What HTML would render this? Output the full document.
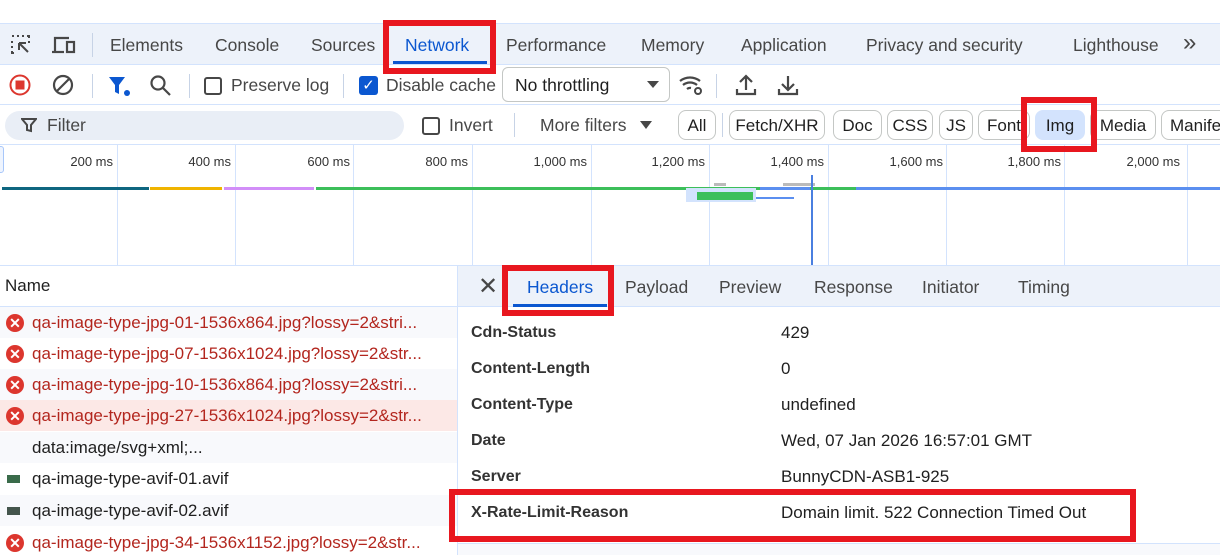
<!DOCTYPE html>
<html><head><meta charset="utf-8"><style>
*{margin:0;padding:0;box-sizing:border-box}
body{width:1220px;height:555px;overflow:hidden;background:#fff;font-family:"Liberation Sans",sans-serif;color:#1f1f1f;position:relative}
.a{position:absolute;white-space:nowrap}
.t{font-size:17.5px;color:#474747}
.red{position:absolute;border:6px solid #e8171f}
.chip{position:absolute;top:110px;height:30px;border:1px solid #c4c7c5;border-radius:8px;font-size:17px;line-height:30px;text-align:center;color:#1f1f1f;overflow:hidden}
.ms{position:absolute;top:154px;font-size:13px;color:#333;text-align:right;width:80px}
.vl{position:absolute;top:145px;width:1px;height:120px;background:#d3e3fd}
.row{position:absolute;left:0;width:457px;height:31px;font-size:17px;line-height:31px}
.row span{position:absolute;left:32px}
.err{position:absolute;left:6px;top:7px;width:18px;height:18px;border-radius:50%;background:#dc362e;color:#fff;font-size:14px;line-height:18px;text-align:center;font-weight:bold}
.rd{color:#b3261e}
.hk{position:absolute;left:471px;font-size:16px;font-weight:bold;color:#333}
.hv{position:absolute;left:781px;font-size:17px;color:#1f1f1f}
</style></head><body>
<div class="a" style="left:0;top:23px;width:1220px;height:42px;background:#edf2fa;border-top:1px solid #d3e3fd;border-bottom:1px solid #d3e3fd"></div>
<svg class="a" style="left:10px;top:34px" width="22" height="22" viewBox="0 0 22 22" fill="none" stroke="#474747" stroke-width="2"><path d="M2 2h2M7 2h2M12 2h2M17 2h2v2M2 7v2M2 12v2M2 17v2h2M19 7v2" /><path d="M9 9l9 9M9 9v7M9 9h7"/></svg>
<svg class="a" style="left:51px;top:34px" width="26" height="22" viewBox="0 0 26 22" fill="none" stroke="#474747" stroke-width="2.2"><path d="M4 18V4h14"/><path d="M1 18h12"/><rect x="16" y="8" width="7" height="10"/></svg>
<div class="a" style="left:92px;top:33px;width:1px;height:24px;background:#c7d3e6"></div>
<div class="a t" style="left:110px;top:35px">Elements</div>
<div class="a t" style="left:215px;top:35px">Console</div>
<div class="a t" style="left:311px;top:35px">Sources</div>
<div class="a t" style="left:405px;top:35px;color:#0b57d0">Network</div>
<div class="a" style="left:393px;top:61px;width:94px;height:3px;background:#0b57d0"></div>
<div class="a t" style="left:506px;top:35px">Performance</div>
<div class="a t" style="left:641px;top:35px">Memory</div>
<div class="a t" style="left:741px;top:35px">Application</div>
<div class="a t" style="left:866px;top:35px">Privacy and security</div>
<div class="a t" style="left:1073px;top:35px">Lighthouse</div>
<div class="a t" style="left:1183px;top:29px;font-size:24px">&#187;</div>
<svg class="a" style="left:9px;top:74px" width="22" height="22" viewBox="0 0 22 22"><circle cx="11" cy="11" r="9.5" fill="none" stroke="#dc362e" stroke-width="2"/><rect x="6.5" y="6.5" width="9" height="9" fill="#dc362e"/></svg>
<svg class="a" style="left:52px;top:74px" width="22" height="22" viewBox="0 0 22 22" fill="none" stroke="#474747" stroke-width="2.2"><circle cx="11" cy="11" r="9"/><path d="M4.5 17.5L17.5 4.5"/></svg>
<div class="a" style="left:92px;top:74px;width:1px;height:24px;background:#c7d3e6"></div>
<svg class="a" style="left:108px;top:75px" width="24" height="22" viewBox="0 0 24 22"><path d="M1 2h16l-6 8v9l-4-2v-7z" fill="#0b57d0"/><circle cx="19" cy="18" r="3" fill="#0b57d0"/></svg>
<svg class="a" style="left:149px;top:74px" width="24" height="24" viewBox="0 0 24 24" fill="none" stroke="#474747" stroke-width="2.2"><circle cx="9" cy="9" r="6.5"/><path d="M14 14l7 7"/></svg>
<div class="a" style="left:189px;top:74px;width:1px;height:24px;background:#c7d3e6"></div>
<div class="a" style="left:204px;top:77px;width:18px;height:18px;border:2px solid #474747;border-radius:3px"></div>
<div class="a t" style="left:231px;top:75px">Preserve log</div>
<div class="a" style="left:343px;top:74px;width:1px;height:24px;background:#c7d3e6"></div>
<div class="a" style="left:359px;top:76px;width:19px;height:19px;background:#0b57d0;border-radius:3px;color:#fff;font-size:15px;line-height:19px;text-align:center">&#10003;</div>
<div class="a t" style="left:386px;top:75px">Disable cache</div>
<div class="a" style="left:502px;top:67px;width:168px;height:35px;border:1px solid #c4c7c5;border-radius:6px"></div>
<div class="a t" style="left:515px;top:75px;color:#1f1f1f">No throttling</div>
<div class="a" style="left:647px;top:81px;border-left:6px solid transparent;border-right:6px solid transparent;border-top:7px solid #474747"></div>
<svg class="a" style="left:678px;top:73px" width="28" height="24" viewBox="0 0 28 24" fill="none" stroke="#474747" stroke-width="2.2"><path d="M2 8a16 16 0 0 1 20 0M5 12a11 11 0 0 1 14 0M9 16a5 5 0 0 1 4-1"/><circle cx="20" cy="18" r="3" stroke-width="2"/></svg>
<div class="a" style="left:716px;top:74px;width:1px;height:24px;background:#c7d3e6"></div>
<svg class="a" style="left:735px;top:73px" width="22" height="24" viewBox="0 0 22 24" fill="none" stroke="#474747" stroke-width="2.2"><path d="M11 17V3M5 9l6-6 6 6M2 16v5h18v-5"/></svg>
<svg class="a" style="left:777px;top:73px" width="22" height="24" viewBox="0 0 22 24" fill="none" stroke="#474747" stroke-width="2.2"><path d="M11 3v14M5 11l6 6 6-6M2 16v5h18v-5"/></svg>
<div class="a" style="left:0;top:104px;width:1220px;height:1px;background:#d3e3fd"></div>
<div class="a" style="left:5px;top:111px;width:399px;height:29px;background:#e9eef6;border-radius:15px"></div>
<svg class="a" style="left:21px;top:117px" width="16" height="16" viewBox="0 0 16 16" fill="none" stroke="#474747" stroke-width="2"><path d="M1 2h14l-5 6v6l-4-1V8z"/></svg>
<div class="a t" style="left:47px;top:115px">Filter</div>
<div class="a" style="left:422px;top:117px;width:18px;height:18px;border:2px solid #474747;border-radius:3px"></div>
<div class="a t" style="left:449px;top:115px">Invert</div>
<div class="a" style="left:514px;top:113px;width:1px;height:24px;background:#c7d3e6"></div>
<div class="a t" style="left:540px;top:115px">More filters</div>
<div class="a" style="left:640px;top:121px;border-left:6px solid transparent;border-right:6px solid transparent;border-top:8px solid #474747"></div>
<div class="chip" style="left:678px;width:38px">All</div>
<div class="a" style="left:722px;top:113px;width:1px;height:24px;background:#c7d3e6"></div>
<div class="chip" style="left:729px;width:96px">Fetch/XHR</div>
<div class="chip" style="left:833px;width:49px">Doc</div>
<div class="chip" style="left:887px;width:46px">CSS</div>
<div class="chip" style="left:939px;width:34px">JS</div>
<div class="chip" style="left:978px;width:52px">Font</div>
<div class="chip" style="left:1035px;width:50px;background:#d3e3fd;border-color:#d3e3fd">Img</div>
<div class="chip" style="left:1090px;width:66px">Media</div>
<div class="chip" style="left:1161px;width:90px;text-align:left;padding-left:8px">Manifest</div>
<div class="a" style="left:0;top:144px;width:1220px;height:1px;background:#d3e3fd"></div>
<div class="a" style="left:-4px;top:146px;width:8px;height:27px;border:1px solid #a8c7fa;border-radius:3px;background:#eef4fe"></div>
<div class="vl" style="left:117px"></div><div class="vl" style="left:235px"></div><div class="vl" style="left:353px"></div><div class="vl" style="left:472px"></div><div class="vl" style="left:591px"></div><div class="vl" style="left:709px"></div><div class="vl" style="left:828px"></div><div class="vl" style="left:946px"></div><div class="vl" style="left:1064px"></div><div class="vl" style="left:1187px"></div>
<div class="ms" style="left:33px">200 ms</div><div class="ms" style="left:151px">400 ms</div><div class="ms" style="left:270px">600 ms</div><div class="ms" style="left:388px">800 ms</div><div class="ms" style="left:507px">1,000 ms</div><div class="ms" style="left:625px">1,200 ms</div><div class="ms" style="left:744px">1,400 ms</div><div class="ms" style="left:863px">1,600 ms</div><div class="ms" style="left:981px">1,800 ms</div><div class="ms" style="left:1100px">2,000 ms</div>
<div class="a" style="left:2px;top:187px;width:147px;height:3px;background:#0e6680"></div>
<div class="a" style="left:150px;top:187px;width:72px;height:3px;background:#f0b400"></div>
<div class="a" style="left:224px;top:187px;width:90px;height:3px;background:#d28ef8"></div>
<div class="a" style="left:316px;top:187px;width:370px;height:3px;background:#3cbf5a"></div>
<div class="a" style="left:686px;top:187px;width:170px;height:3px;background:#3cbf5a"></div>
<div class="a" style="left:760px;top:187px;width:50px;height:3px;background:#5b8ff0"></div>
<div class="a" style="left:856px;top:187px;width:364px;height:3px;background:#5b8ff0"></div>
<div class="a" style="left:714px;top:183px;width:12px;height:3px;background:#bbb"></div>
<div class="a" style="left:783px;top:183px;width:32px;height:3px;background:#bbb"></div>
<div class="a" style="left:686px;top:188px;width:70px;height:14px;background:#d3e3fd"></div>
<div class="a" style="left:697px;top:192px;width:56px;height:8px;background:#3cbf5a"></div>
<div class="a" style="left:756px;top:197px;width:38px;height:2px;background:#5b8ff0"></div>
<div class="a" style="left:811px;top:175px;width:2px;height:90px;background:#4a7fe0"></div>
<div class="a" style="left:0;top:265px;width:1220px;height:1px;background:#d3e3fd"></div>
<div class="a" style="left:457px;top:266px;width:1px;height:289px;background:#d3e3fd"></div>
<div class="a" style="left:0;top:306px;width:457px;height:1px;background:#d3e3fd"></div>
<div class="a" style="left:5px;top:276px;font-size:17px">Name</div>
<div class="row" style="top:307px;background:#f8f9fc"><div class="err">✕</div><span class="rd">qa-image-type-jpg-01-1536x864.jpg?lossy=2&amp;stri...</span></div>
<div class="row" style="top:338px"><div class="err">✕</div><span class="rd">qa-image-type-jpg-07-1536x1024.jpg?lossy=2&amp;str...</span></div>
<div class="row" style="top:369px;background:#f8f9fc"><div class="err">✕</div><span class="rd">qa-image-type-jpg-10-1536x864.jpg?lossy=2&amp;stri...</span></div>
<div class="row" style="top:400px;background:#fce8e6"><div class="err">✕</div><span class="rd">qa-image-type-jpg-27-1536x1024.jpg?lossy=2&amp;str...</span></div>
<div class="row" style="top:432px;background:#f8f9fc"><span>data:image/svg+xml;...</span></div>
<div class="row" style="top:463px"><div class="a" style="left:7px;top:12px;width:13px;height:8px;background:#3a6b4a"></div><span>qa-image-type-avif-01.avif</span></div>
<div class="row" style="top:495px;background:#f8f9fc"><div class="a" style="left:7px;top:12px;width:13px;height:8px;background:#44554c"></div><span>qa-image-type-avif-02.avif</span></div>
<div class="row" style="top:527px"><div class="err">✕</div><span class="rd">qa-image-type-jpg-34-1536x1152.jpg?lossy=2&amp;str...</span></div>
<div class="a" style="left:458px;top:266px;width:762px;height:41px;background:#edf2fa;border-bottom:1px solid #d3e3fd"></div>
<div class="a" style="left:478px;top:272px;font-size:24px;color:#474747">✕</div>
<div class="a t" style="left:527px;top:277px;color:#0b57d0">Headers</div>
<div class="a" style="left:513px;top:304px;width:94px;height:3px;background:#0b57d0"></div>
<div class="a t" style="left:625px;top:277px">Payload</div>
<div class="a t" style="left:719px;top:277px">Preview</div>
<div class="a t" style="left:814px;top:277px">Response</div>
<div class="a t" style="left:922px;top:277px">Initiator</div>
<div class="a t" style="left:1018px;top:277px">Timing</div>
<div class="hk" style="top:324px">Cdn-Status</div><div class="hv" style="top:323px">429</div>
<div class="hk" style="top:360px">Content-Length</div><div class="hv" style="top:359px">0</div>
<div class="hk" style="top:396px">Content-Type</div><div class="hv" style="top:395px">undefined</div>
<div class="hk" style="top:432px">Date</div><div class="hv" style="top:431px">Wed, 07 Jan 2026 16:57:01 GMT</div>
<div class="hk" style="top:468px">Server</div><div class="hv" style="top:467px">BunnyCDN-ASB1-925</div>
<div class="hk" style="top:504px">X-Rate-Limit-Reason</div><div class="hv" style="top:503px">Domain limit. 522 Connection Timed Out</div>
<div class="a" style="left:458px;top:543px;width:762px;height:12px;background:#f8f9fc;border-top:1px solid #d3e3fd"></div>
<div class="red" style="left:383px;top:20px;width:113px;height:54px"></div>
<div class="red" style="left:1021px;top:97px;width:76px;height:55px"></div>
<div class="red" style="left:502px;top:265px;width:112px;height:51px"></div>
<div class="red" style="left:449px;top:489px;width:687px;height:53px"></div>
</body></html>
